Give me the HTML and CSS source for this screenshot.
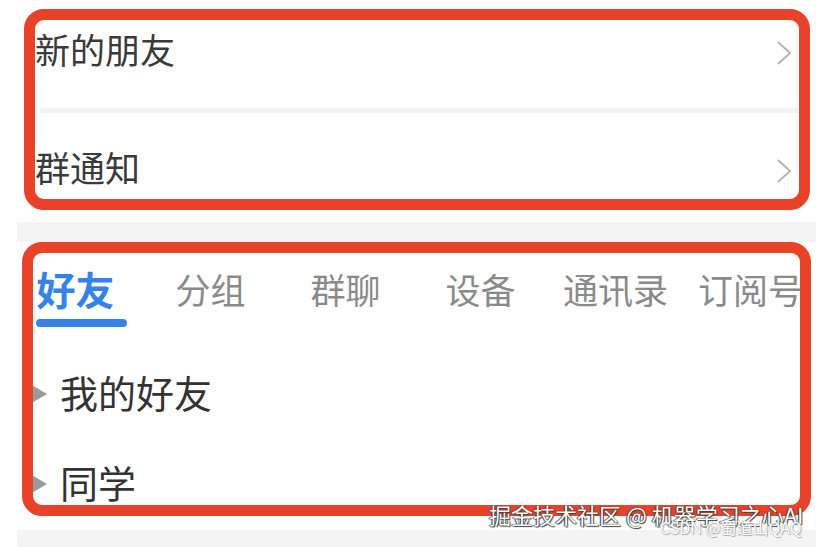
FILE: index.html
```html
<!DOCTYPE html>
<html lang="zh-CN">
<head>
    <meta charset="UTF-8">
    <meta name="viewport" content="width=device-width, initial-scale=1.0">
    <title>联系人</title>
    <link rel="stylesheet" href="styles.css">
</head>
<body>
    <div class="screen">
        <section class="card card-top">
            <a class="cell" href="#">
                <span>新的朋友</span>
                <svg class="chevron" width="16" height="26" viewBox="0 0 16 26"><path d="M2 2 L14 13 L2 24" fill="none" stroke="#b4b4b4" stroke-width="2"/></svg>
            </a>
            <div class="divider"></div>
            <a class="cell cell-second" href="#">
                <span>群通知</span>
                <svg class="chevron" width="16" height="26" viewBox="0 0 16 26"><path d="M2 2 L14 13 L2 24" fill="none" stroke="#b4b4b4" stroke-width="2"/></svg>
            </a>
        </section>
        <div class="band"></div>
        <section class="card card-contacts">
            <nav class="tabs">
                <div class="tab active"><span class="tab-label">好友</span><i class="tab-bar"></i></div>
                <div class="tab"><span class="tab-label">分组</span></div>
                <div class="tab"><span class="tab-label">群聊</span></div>
                <div class="tab"><span class="tab-label">设备</span></div>
                <div class="tab"><span class="tab-label">通讯录</span></div>
                <div class="tab"><span class="tab-label">订阅号</span></div>
            </nav>
            <ul class="groups">
                <li><i class="arrow"></i>我的好友</li>
                <li><i class="arrow"></i>同学</li>
            </ul>
        </section>
        <div class="band band-bottom"></div>
        <div class="watermark">掘金技术社区 @ 机器学习之心AI</div>
        <div class="watermark-csdn">CSDN @蜀道山QAQ</div>
    </div>
</body>
</html>
```

FILE: styles.css
```css
html, body {
    margin: 0;
    padding: 0;
    background-color: #FFFFFF;
}
body {
    font-family: "Noto Sans CJK SC", "Noto Sans", sans-serif;
    color: #333;
}
* {
    box-sizing: border-box;
}
.screen {
    position: relative;
    width: 826px;
    height: 547px;
    overflow: hidden;
}
.card {
    position: relative;
    background-color: #FFFFFF;
}
/* red annotation frames drawn over the screenshot */
.card::after {
    content: '';
    position: absolute;
    border: 11px solid #e8432a;
    border-radius: 20px;
}
.card-top {
    height: 222px;
}
.card-top::after {
    top: 9px;
    left: 24px;
    right: 16px;
    bottom: 12px;
}
.cell {
    display: flex;
    align-items: center;
    justify-content: space-between;
    height: 108px;
    padding: 0 34px 11px 35px;
    font-size: 35px;
    line-height: 1;
    color: #3a3a3a;
    text-decoration: none;
}
.cell-second {
    height: 109px;
    padding-bottom: 2px;
}
.chevron {
    margin-top: 8px;
}
.divider {
    height: 5px;
    margin: 0 20px 0 40px;
    background-color: #f4f4f4;
}
.band {
    height: 20px;
    margin: 0 10px 0 17px;
    background-color: #f4f4f4;
}
.band-bottom {
    height: 17px;
}
.card-contacts {
    height: 288px;
}
.card-contacts::after {
    top: 0;
    left: 22px;
    right: 15px;
    bottom: 14px;
}
.tabs {
    display: flex;
    align-items: flex-start;
    height: 108px;
    margin: 0 8px;
    padding-top: 29px;
}
.tab {
    flex: 1;
    display: flex;
    flex-direction: column;
    align-items: center;
}
.tab-label {
    font-size: 35px;
    line-height: 35px;
    color: #8a8a8a;
    white-space: nowrap;
}
.tab.active .tab-label {
    font-size: 39px;
    font-weight: bold;
    color: #3583e8;
}
.tab-bar {
    display: block;
    width: 91px;
    height: 8px;
    margin: 13px 0 0 12px;
    border-radius: 4px;
    background-color: #3583e8;
}
.groups {
    list-style: none;
    margin: 0;
    padding: 0;
}
.groups li {
    display: flex;
    align-items: center;
    height: 90px;
    padding: 0 0 6px 30px;
    font-size: 38px;
    line-height: 1;
    color: #333;
}
.arrow {
    width: 0;
    height: 0;
    margin: 4px 13px 0 0;
    border-left: 17px solid #9a9a9a;
    border-top: 10px solid transparent;
    border-bottom: 10px solid transparent;
}
.watermark {
    position: absolute;
    top: 503px;
    left: 489px;
    font-size: 22px;
    line-height: 1;
    color: #FFFFFF;
    white-space: nowrap;
    text-shadow: 0 0 1px #222, 1px 1px 1px #444, -1px 0 1px #444;
}
.watermark-csdn {
    position: absolute;
    top: 519px;
    left: 660px;
    font-size: 16px;
    line-height: 1;
    color: #FFFFFF;
    white-space: nowrap;
    text-shadow: 0 0 1px #999, 1px 1px 1px #aaa;
}
```
